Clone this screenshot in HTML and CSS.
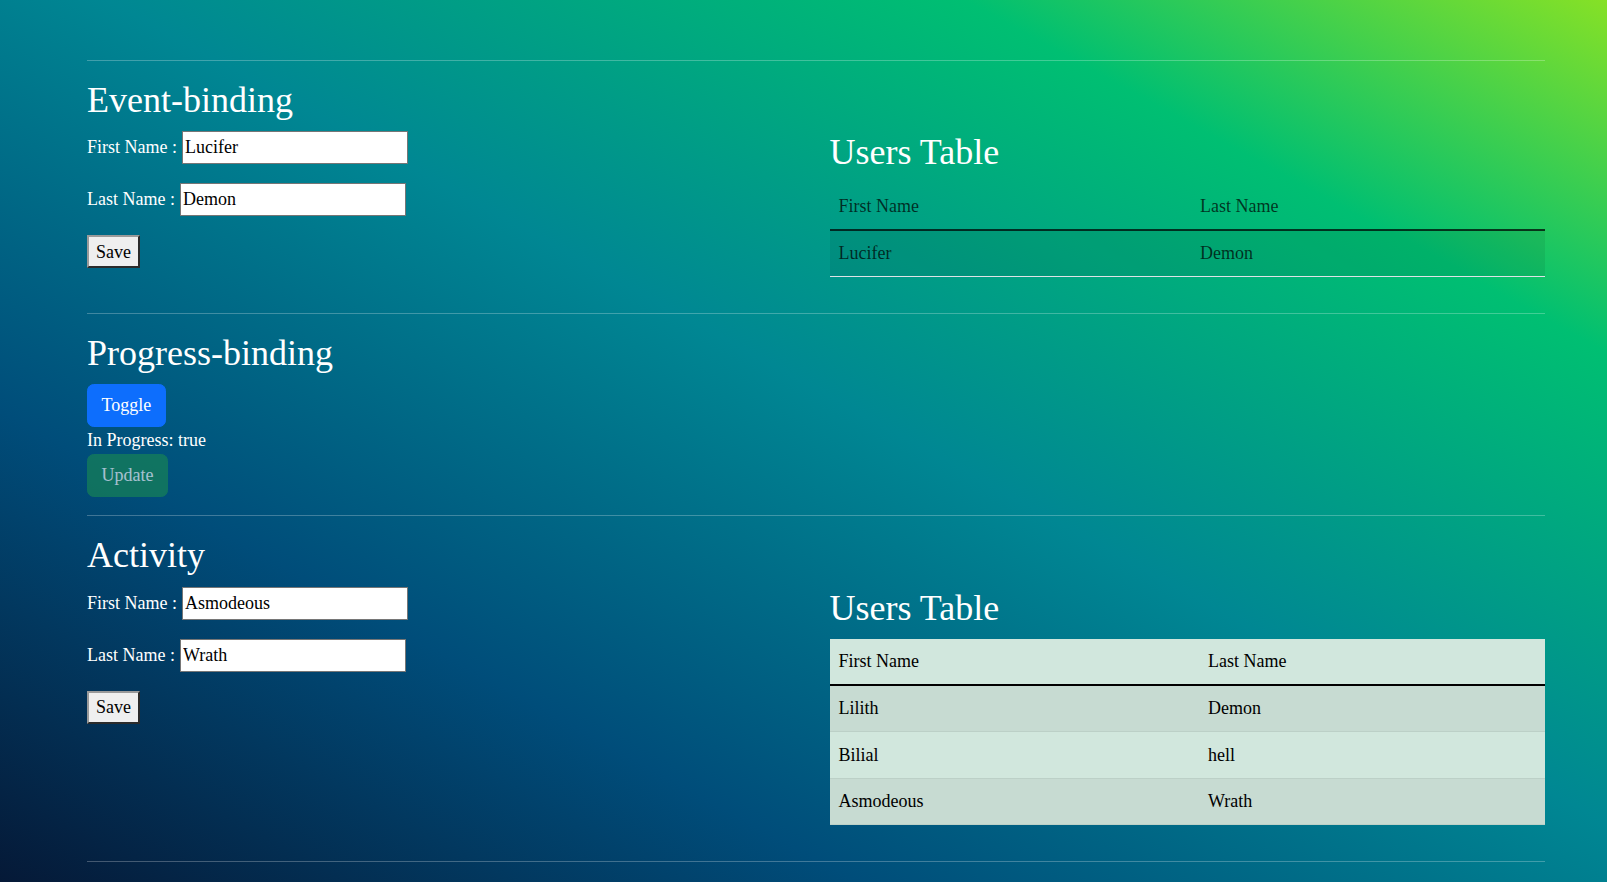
FILE: index.html
```html
<!DOCTYPE html>
<html lang="en">
<head>
<meta charset="utf-8">
<title>Bindings</title>
<link rel="stylesheet" href="styles.css">
</head>
<body>
<div class="page">
  <hr class="rule">

  <section class="section">
    <h2 class="title">Event-binding</h2>
    <div class="row">
      <div class="form">
        <div class="field"><label class="label">First Name :</label><input class="input" type="text" value="Lucifer"></div>
        <div class="field"><label class="label">Last Name :</label><input class="input" type="text" value="Demon"></div>
        <button class="save" type="button">Save</button>
      </div>
      <div class="side">
        <h2 class="title">Users Table</h2>
        <table class="users users-plain">
          <thead>
            <tr><td>First Name</td><td>Last Name</td></tr>
          </thead>
          <tbody class="divider">
            <tr class="odd"><td>Lucifer</td><td>Demon</td></tr>
          </tbody>
        </table>
      </div>
    </div>
  </section>

  <hr class="rule">

  <section class="section">
    <h2 class="title">Progress-binding</h2>
    <div><button class="btn btn-primary" type="button">Toggle</button></div>
    <div class="status">In Progress: true</div>
    <div><button class="btn btn-success" type="button" disabled>Update</button></div>
  </section>

  <hr class="rule">

  <section class="section">
    <h2 class="title">Activity</h2>
    <div class="row">
      <div class="form">
        <div class="field"><label class="label">First Name :</label><input class="input" type="text" value="Asmodeous"></div>
        <div class="field"><label class="label">Last Name :</label><input class="input" type="text" value="Wrath"></div>
        <button class="save" type="button">Save</button>
      </div>
      <div class="side">
        <h2 class="title">Users Table</h2>
        <table class="users users-success">
          <thead>
            <tr><td>First Name</td><td>Last Name</td></tr>
          </thead>
          <tbody class="divider">
            <tr class="odd"><td>Lilith</td><td>Demon</td></tr>
            <tr class="even"><td>Bilial</td><td>hell</td></tr>
            <tr class="odd"><td>Asmodeous</td><td>Wrath</td></tr>
          </tbody>
        </table>
      </div>
    </div>
  </section>

  <hr class="rule">
</div>
</body>
</html>
```

FILE: styles.css
```css
html {
  min-height: 100%;
  background: linear-gradient(to right top, #051937, #004d7a, #008793, #00bf72 80%, #86e126);
  background-attachment: fixed;
}

body {
  margin: 0;
  font-family: "Liberation Serif", "Times New Roman", serif;
  font-size: 18px;
  line-height: 1.5;
  color: #fff;
}

.page {
  padding: 42px 62px 0 87px;
}

.rule {
  height: 0;
  margin: 18px 0;
  border: 0;
  border-top: 1px solid rgba(255, 255, 255, 0.25);
}

.section {
  display: block;
}

.title {
  margin: 0 0 9px;
  font-size: 36px;
  font-weight: 400;
  line-height: 1.2;
  color: #fff;
}

.row {
  display: grid;
  grid-template-columns: 1fr 1fr;
  column-gap: 27px;
  align-items: start;
}

.form {
  padding-top: 0;
}

.field {
  display: flex;
  align-items: center;
  margin-bottom: 19px;
}

.label {
  margin-right: 5px;
  white-space: pre;
}

.input {
  box-sizing: border-box;
  width: 226px;
  height: 33px;
  padding: 0 2px;
  border: 1px solid #767676;
  background: #fff;
  color: #000;
  font-family: "Liberation Serif", "Times New Roman", serif;
  font-size: 18px;
  outline: none;
}

.save {
  display: block;
  box-sizing: border-box;
  height: 33px;
  padding: 0 7px;
  background: #efefef;
  color: #000;
  font-family: "Liberation Serif", "Times New Roman", serif;
  font-size: 18px;
  line-height: 1;
  border-style: solid;
  border-width: 2px;
  border-color: #9a9a9a #2b2b2b #2b2b2b #9a9a9a;
}

.btn {
  display: inline-block;
  box-sizing: border-box;
  padding: 7px 13.5px;
  font-family: "Liberation Serif", "Times New Roman", serif;
  font-size: 18px;
  line-height: 1.5;
  color: #fff;
  border: 1px solid transparent;
  border-radius: 6.75px;
  vertical-align: top;
}

.btn-primary {
  background: #0d6efd;
  border-color: #0d6efd;
}

.btn-success {
  background: #198754;
  border-color: #198754;
  opacity: 0.65;
}

.status {
  line-height: 27px;
}

.users {
  width: 100%;
  margin-bottom: 18px;
  border-collapse: collapse;
}

.users td {
  padding: 9.2px 9px;
  border-bottom: 1px solid;
  text-align: left;
  vertical-align: top;
}

.users .divider {
  border-top: 2px solid currentColor;
}

.users-plain {
  color: rgba(0, 0, 0, 0.72);
}

.users-plain td {
  border-bottom-color: #dee2e6;
}

.users-plain thead td {
  border-bottom-color: transparent;
}

.users-plain .odd td {
  background: rgba(0, 0, 0, 0.07);
}

.users-success {
  color: #000;
}

.users-success td {
  background: #d1e7dd;
  border-bottom-color: #bcd0c7;
}

.users-success .odd td {
  background: #c7dbd2;
}
```
